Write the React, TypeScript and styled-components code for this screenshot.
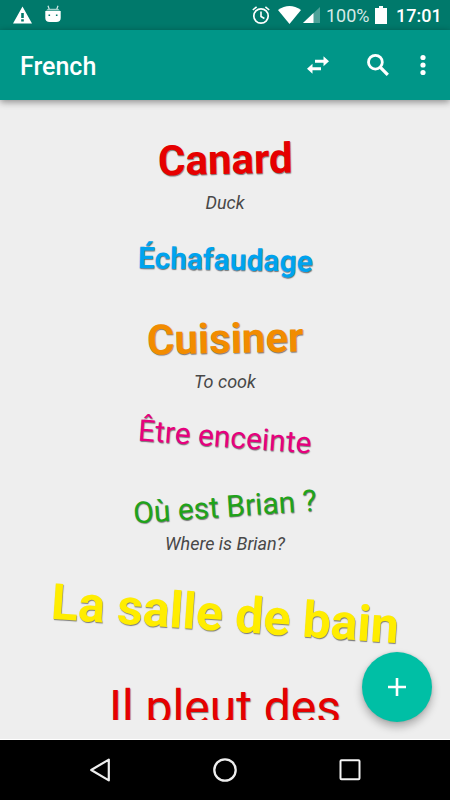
import React from 'react';
import styled, { createGlobalStyle } from 'styled-components';

const GlobalStyle = createGlobalStyle`
  * { box-sizing: border-box; }
  body { margin: 0; background: #eee; font-family: Roboto, sans-serif; }
`;

const Screen = styled.div`
  width: 450px;
  height: 800px;
  display: flex;
  flex-direction: column;
  overflow: hidden;
  background: #eee;
`;

const StatusBar = styled.header`
  height: 30px;
  flex: none;
  display: flex;
  align-items: center;
  padding: 0 11px 0 12px;
  background: #00796b;
  color: #fff;
`;

const StatusIcon = styled.svg<{ $gap?: number }>`
  display: block;
  flex: none;
  margin-right: ${(p) => p.$gap ?? 0}px;
`;

const Spacer = styled.div`
  flex: 1;
`;

const BatteryText = styled.span`
  width: 43px;
  margin-right: 6px;
  font-size: 18px;
  line-height: 30px;
  white-space: nowrap;
  color: #d6e9e7;
  padding-top: 1px;
`;

const Clock = styled.span`
  font-size: 18px;
  font-weight: 500;
  line-height: 30px;
  padding-top: 1px;
  width: 43px;
  white-space: nowrap;
`;

const Toolbar = styled.div`
  height: 70px;
  flex: none;
  display: flex;
  align-items: center;
  padding: 0 12px 0 20px;
  background: #009688;
  color: #fff;
  box-shadow: 0 2px 7px rgba(0, 0, 0, 0.42);
  z-index: 1;
`;

const Title = styled.h1`
  flex: 1;
  margin: 0;
  padding-top: 3px;
  font-size: 25px;
  font-weight: 500;
  line-height: 30px;
`;

const Action = styled.button<{ $width: number }>`
  width: ${(p) => p.$width}px;
  height: 60px;
  padding: 0;
  border: 0;
  background: none;
  color: #fff;
  display: flex;
  align-items: center;
  justify-content: center;
`;

const Content = styled.main`
  position: relative;
  flex: 1;
  min-height: 0;
  padding-bottom: 19px;
  border-bottom: 1px solid #fff;
`;

const WordList = styled.ul`
  height: 620px;
  margin: 0;
  padding: 30px 0 0;
  list-style: none;
  overflow: hidden;
`;

const Entry = styled.li<{ $gap: number }>`
  display: flex;
  flex-direction: column;
  align-items: center;
  margin-bottom: ${(p) => p.$gap}px;
`;

const Word = styled.span<{ $size: number; $weight: number; $color: string; $angle: number; $height: number; $spacing?: number }>`
  height: ${(p) => p.$height}px;
  line-height: ${(p) => p.$height}px;
  font-size: ${(p) => p.$size}px;
  font-weight: ${(p) => p.$weight};
  letter-spacing: ${(p) => p.$spacing ?? 0}px;
  color: ${(p) => p.$color};
  transform: rotate(${(p) => p.$angle}deg);
  text-shadow: 0.5px 1px 1px rgba(0, 0, 0, 0.5);
  white-space: nowrap;
`;

const Translation = styled.span`
  height: 26px;
  line-height: 26px;
  font-size: 18px;
  font-style: italic;
  color: #484848;
  white-space: nowrap;
`;

const AddButton = styled.button`
  position: absolute;
  right: 18px;
  bottom: 17px;
  width: 70px;
  height: 70px;
  padding: 0;
  border: 0;
  border-radius: 50%;
  background: #00bfa5;
  box-shadow: 0 5px 9px rgba(0, 0, 0, 0.28), 0 0 3px rgba(0, 0, 0, 0.12);
  display: flex;
  align-items: center;
  justify-content: center;
`;

const NavBar = styled.nav`
  height: 60px;
  flex: none;
  display: flex;
  align-items: center;
  justify-content: center;
  background: #000;
`;

const NavButton = styled.button`
  width: 125px;
  height: 60px;
  padding: 0;
  border: 0;
  background: none;
  display: flex;
  align-items: center;
  justify-content: center;
`;

interface WordEntry {
  text: string;
  translation?: string;
  size: number;
  weight: number;
  color: string;
  angle: number;
  height: number;
  gap: number;
}

const words: WordEntry[] = [
  { text: 'Canard', translation: 'Duck', size: 42, weight: 700, color: '#e60000', angle: -1.2, height: 60, gap: 14 },
  { text: 'Échafaudage', size: 30, weight: 700, color: '#00a3ee', angle: 1.3, height: 60, gap: 18 },
  { text: 'Cuisiner', translation: 'To cook', size: 42, weight: 700, color: '#f28c00', angle: -1.2, height: 61, gap: 12 },
  { text: 'Être enceinte', size: 30, weight: 400, color: '#e6007e', angle: 4.3, height: 60, gap: 15 },
  { text: 'Où est Brian ?', translation: 'Where is Brian?', size: 30, weight: 400, color: '#1fa31a', angle: -4, height: 49, gap: 25 },
  { text: 'La salle de bain', size: 50, weight: 700, color: '#ffed00', angle: 4, height: 64, gap: 32 },
  { text: 'Il pleut des', size: 48, weight: 400, color: '#e60000', angle: 0, height: 60, gap: 0 },
];

const App: React.FC = () => (
  <>
    <GlobalStyle />
    <Screen>
      <StatusBar>
        <StatusIcon $gap={12} width="21" height="20" viewBox="0 0 21 20">
          <path fill="#fff" fillRule="evenodd" d="M10.5 1.5 20 18.5H1ZM9.2 8v5h2.6V8Zm0 6.2v2.2h2.6v-2.2Z" />
        </StatusIcon>
        <StatusIcon width="16" height="20" viewBox="0 0 16 20">
          <path stroke="#d6e9e7" strokeWidth="1.2" d="m3 .8 1.4 4M13 .8l-1.4 4" />
          <path fill="#9fd0c9" d="M1 5.5 3 3.8h10l2 1.7Z" />
          <path fill="#fff" fillRule="evenodd" d="M.3 6h15.4v7q0 4-4.5 4H4.8Q.3 17 .3 13Zm3.2 3.5v1.6h1.6V9.500Zm7.400 0v1.6h1.600V9.500Z" />
        </StatusIcon>
        <Spacer />
        <StatusIcon $gap={8} width="18" height="20" viewBox="0 0 18 20" fill="none" stroke="#fff">
          <circle cx="9" cy="11" r="7.200" strokeWidth="1.700" />
          <path strokeWidth="1.600" d="M9 6.500v5l3.400 2M.8 5 4.600 1.800M17.200 5l-3.800-3.200" />
        </StatusIcon>
        <StatusIcon $gap={2} width="23" height="18" viewBox="0 0 23 18">
          <path fill="#fff" d="M0 4Q11.500-4 23 4L11.500 18Z" />
        </StatusIcon>
        <StatusIcon $gap={6} width="17" height="18" viewBox="0 0 17 18">
          <path fill="#4da198" d="M17 1v16H0Z" />
          <path fill="#fff" d="M10.500 7v10H0Z" />
        </StatusIcon>
        <BatteryText>100%</BatteryText>
        <StatusIcon $gap={9} width="12" height="18" viewBox="0 0 12 18">
          <path fill="#fff" d="M4 0h4v2h4v16H0V2h4Z" />
        </StatusIcon>
        <Clock>17:01</Clock>
      </StatusBar>
      <Toolbar>
        <Title>French</Title>
        <Action $width={60} aria-label="Swap languages">
          <svg width="24" height="20" viewBox="0 0 24 20" fill="#fff">
            <path d="M9 4.700h8.500V1.200L23 6.200l-5.500 5V7.700H9ZM15 12.300H6.500V8.800L1 13.800l5.500 5v-3.500H15Z" />
          </svg>
        </Action>
        <Action $width={60} aria-label="Search">
          <svg width="24" height="24" viewBox="0 0 24 24" fill="none" stroke="#fff" strokeWidth="2.800">
            <circle cx="9.400" cy="9.200" r="6.900" />
            <path strokeWidth="3.300" d="m14.400 14.400 7.400 7.400" />
          </svg>
        </Action>
        <Action $width={30} aria-label="More options">
          <svg width="6" height="22" viewBox="0 0 6 22" fill="#fff">
            <circle cx="3" cy="3.500" r="2.600" />
            <circle cx="3" cy="11" r="2.600" />
            <circle cx="3" cy="18.500" r="2.600" />
          </svg>
        </Action>
      </Toolbar>
      <Content>
        <WordList>
          {words.map((w) => (
            <Entry key={w.text} $gap={w.gap}>
              <Word $size={w.size} $weight={w.weight} $color={w.color} $angle={w.angle} $height={w.height}>
                {w.text}
              </Word>
              {w.translation && <Translation>{w.translation}</Translation>}
            </Entry>
          ))}
        </WordList>
        <AddButton aria-label="Add word">
          <svg width="18" height="18" viewBox="0 0 18 18" fill="none" stroke="#fff" strokeWidth="2.600">
            <path d="M9 0v18M0 9h18" />
          </svg>
        </AddButton>
      </Content>
      <NavBar>
        <NavButton aria-label="Back">
          <svg width="24" height="24" viewBox="0 0 24 24" fill="none" stroke="#eee" strokeWidth="2.200" strokeLinejoin="round">
            <path d="M20.800 1.600v20.800L3.200 12Z" />
          </svg>
        </NavButton>
        <NavButton aria-label="Home">
          <svg width="24" height="24" viewBox="0 0 24 24" fill="none" stroke="#eee" strokeWidth="2.300">
            <circle cx="12" cy="12" r="10.700" />
          </svg>
        </NavButton>
        <NavButton aria-label="Recent apps">
          <svg width="24" height="24" viewBox="0 0 24 24" fill="none" stroke="#f4f4f4" strokeWidth="2">
            <rect x="2.500" y="2.200" width="19" height="19" rx="1" />
          </svg>
        </NavButton>
      </NavBar>
    </Screen>
  </>
);

export default App;
